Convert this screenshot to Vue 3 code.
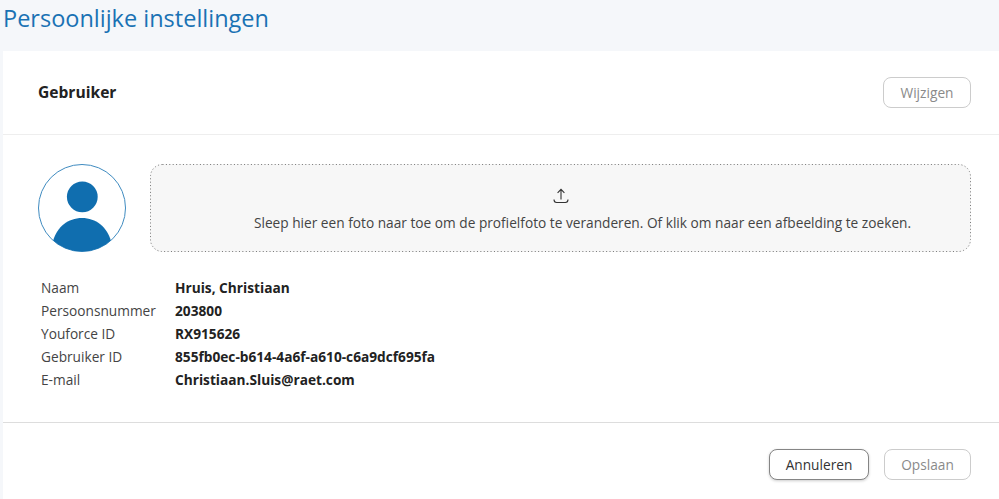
<script setup>
const rows = [
  ['Naam', 'Hruis, Christiaan'],
  ['Persoonsnummer', '203800'],
  ['Youforce ID', 'RX915626'],
  ['Gebruiker ID', '855fb0ec-b614-4a6f-a610-c6a9dcf695fa'],
  ['E-mail', 'Christiaan.Sluis@raet.com'],
]
</script>

<template>
  <div class="page">
    <h1 class="title">Persoonlijke instellingen</h1>
    <section class="card">
      <header class="head">
        <h2>Gebruiker</h2>
        <button class="btn off wijzig" type="button">Wijzigen</button>
      </header>
      <div class="body">
        <div class="photo">
          <svg class="avatar" width="88" height="88" viewBox="0 0 88 88">
            <defs>
              <clipPath id="round"><circle cx="44" cy="44" r="43.5" /></clipPath>
            </defs>
            <circle cx="44" cy="44" r="43.5" fill="#fff" stroke="#3f8bc0" stroke-width="1" />
            <circle cx="44.3" cy="32.8" r="15.4" fill="#106eaf" />
            <path clip-path="url(#round)" d="M15 77 C19 63 30 54 44 54 C58 54 69 63 73 77 L73 88 L15 88 Z" fill="#106eaf" />
          </svg>
          <div class="drop">
            <svg class="dots" width="821" height="88" viewBox="0 0 821 88" fill="none">
              <rect x="0.5" y="0.5" width="820" height="87" rx="12" stroke="#777" stroke-width="1" stroke-dasharray="1 2.4" />
            </svg>
            <svg width="16" height="16" viewBox="0 0 16 16" fill="none" stroke="#333" stroke-width="1.1">
              <path d="M8 11.5V1.5M4.6 4.8 8 1.4l3.4 3.4" />
              <path d="M1 11.5c0 1.8 1 3 2.6 3h8.8c1.6 0 2.6-1.2 2.6-3" />
            </svg>
            <p>Sleep hier een foto naar toe om de profielfoto te veranderen. Of klik om naar een afbeelding te zoeken.</p>
          </div>
        </div>
        <dl class="info">
          <div v-for="r in rows" :key="r[0]" class="row">
            <dt>{{ r[0] }}</dt>
            <dd>{{ r[1] }}</dd>
          </div>
        </dl>
      </div>
      <footer class="foot">
        <button class="btn on" type="button">Annuleren</button>
        <button class="btn off save" type="button">Opslaan</button>
      </footer>
    </section>
  </div>
</template>

<style>
html, body { margin: 0; background: #f5f7fa; overflow: hidden; }
</style>

<style scoped>
.page {
  width: 999px;
  height: 499px;
  display: flex;
  flex-direction: column;
  background: #f5f7fa;
  font-family: "Open Sans", sans-serif;
  color: #333;
  overflow: hidden;
}
.title {
  margin: 0;
  height: 51px;
  padding: 2px 0 0 3px;
  box-sizing: border-box;
  font-size: 23.5px;
  line-height: 33px;
  font-weight: 400;
  color: #1a72b4;
}
.card {
  flex: 1;
  margin-left: 3px;
  background: #fff;
  display: flex;
  flex-direction: column;
}
.head {
  height: 84px;
  box-sizing: border-box;
  padding: 25px 28px 0 35px;
  border-bottom: 1px solid #eeeeee;
  display: flex;
  justify-content: space-between;
  align-items: flex-start;
}
.head h2 {
  margin: 0;
  font-size: 15.6px;
  line-height: 32px;
  font-weight: 700;
  color: #222;
}
.btn {
  height: 31px;
  box-sizing: border-box;
  border-radius: 8px;
  background: #fff;
  font-family: inherit;
  font-size: 13.7px;
  padding: 0;
  line-height: 28px;
}
.off { border: 1px solid #cccccc; color: #8a8a8a; width: 88px; }
.save { width: 87px; }
.on {
  border: 1px solid #858585;
  color: #333;
  width: 100px;
  box-shadow: 0 1px 3px rgba(0, 0, 0, 0.2);
}
.wijzig { margin-top: 1px; }
.body {
  flex: 1;
  padding: 29px 28px 0 35px;
  border-bottom: 1px solid #dddddd;
}
.photo { display: flex; gap: 24px; }
.avatar { display: block; flex: none; }
.drop {
  position: relative;
  flex: 1;
  height: 88px;
  box-sizing: border-box;
  border-radius: 12px;
  background: #f7f7f7;
  display: flex;
  flex-direction: column;
  align-items: center;
  padding-top: 24px;
}
.drop svg { display: block; }
.drop .dots { position: absolute; left: 0; top: 0; }
.drop p {
  margin: 9px 0 0 44px;
  font-size: 13.7px;
  line-height: 19px;
  color: #444;
}
.info { margin: 24px 0 0 3px; }
.row { display: flex; height: 23px; font-size: 13.7px; line-height: 23px; }
.row dt { width: 134px; color: #444; }
.row dd { margin: 0; font-weight: 700; color: #222; }
.foot {
  height: 76px;
  box-sizing: border-box;
  padding: 26px 28px 0 0;
  display: flex;
  justify-content: flex-end;
  gap: 15px;
}
</style>
